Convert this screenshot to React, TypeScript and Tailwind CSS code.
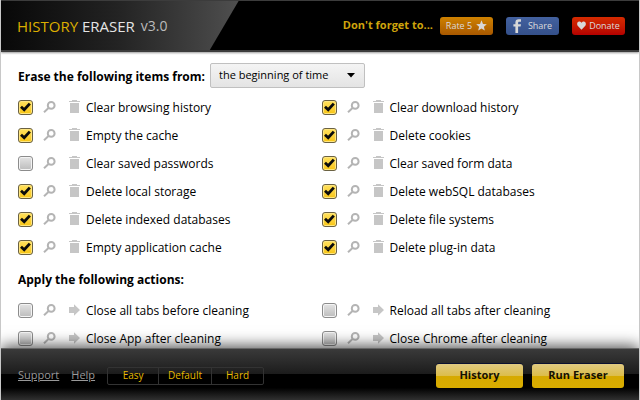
import React, { useState } from "react";

type Item = { label: string; checked: boolean };

const eraseItems: Item[] = [
  { label: "Clear browsing history", checked: true },
  { label: "Clear download history", checked: true },
  { label: "Empty the cache", checked: true },
  { label: "Delete cookies", checked: true },
  { label: "Clear saved passwords", checked: false },
  { label: "Clear saved form data", checked: true },
  { label: "Delete local storage", checked: true },
  { label: "Delete webSQL databases", checked: true },
  { label: "Delete indexed databases", checked: true },
  { label: "Delete file systems", checked: true },
  { label: "Empty application cache", checked: true },
  { label: "Delete plug-in data", checked: true },
];

const actionItems: Item[] = [
  { label: "Close all tabs before cleaning", checked: false },
  { label: "Reload all tabs after cleaning", checked: false },
  { label: "Close App after cleaning", checked: false },
  { label: "Close Chrome after cleaning", checked: false },
];

function Magnifier() {
  return (
    <svg width="13" height="12" viewBox="0 0 13 12" fill="none" stroke="#b4b4b4" strokeWidth="2">
      <circle cx="8.2" cy="4.4" r="3.4" />
      <path d="M5.8 6.8 L1 11.2" />
    </svg>
  );
}

function Trash() {
  return (
    <svg width="11" height="14" viewBox="0 0 11 14" fill="#c6c6c6">
      <path d="M0 1h3V0h5v1h3v1H0zM1 3h9v10H1z" />
    </svg>
  );
}

function Arrow() {
  return (
    <svg width="11" height="12" viewBox="0 0 11 12" fill="#c6c6c6">
      <path d="M0 3h5V0.2L11 6L5 11.8V9H0z" />
    </svg>
  );
}

function Row({ item, kind }: { item: Item; kind: "erase" | "action" }) {
  const [on, setOn] = useState(item.checked);
  const id = item.label.toLowerCase().replace(/ /g, "-");
  return (
    <li className="flex h-7 items-center">
      <span className="relative flex">
        <input
          id={id}
          type="checkbox"
          checked={on}
          onChange={() => setOn(!on)}
          className="size-[15px] appearance-none rounded-[3px] border border-[#8c8c8c] bg-linear-to-b from-[#e4e4e4] to-[#bcbcbc] shadow-[inset_0_0_0_1px_#f4f4f4] checked:border-[#6b6242] checked:from-[#ffe25c] checked:to-[#f8c400] checked:shadow-[inset_0_0_0_1px_#ffe680]"
        />
        {on && (
          <svg className="pointer-events-none absolute inset-0" width="15" height="15" viewBox="0 0 15 15" fill="none" stroke="#0b0b0b" strokeWidth="2.8">
            <path d="M3 6.8 L6.2 9.8 L11.8 3.6" />
          </svg>
        )}
      </span>
      <button type="button" aria-label={`Preview: ${item.label}`} className="ml-2.5 w-[13px]">
        <Magnifier />
      </button>
      <span className="ml-[13px] w-[17px]">{kind === "erase" ? <Trash /> : <Arrow />}</span>
      <label htmlFor={id} className="pt-0.5 whitespace-nowrap">
        {item.label}
      </label>
    </li>
  );
}

function Header() {
  const badge = "flex h-[18px] w-[53px] items-center justify-center rounded-[3px] text-[9px] leading-none font-medium text-[#dcdcdc]";
  return (
    <header className="flex h-[52px] shrink-0 items-center justify-between border-t border-b-2 border-[#3c3c3c] bg-black shadow-[0_1px_2px_rgba(0,0,0,0.4)]">
      <div className="flex h-full w-60 items-center bg-linear-to-r from-[#080808] via-[#242424] to-[#505050] pl-4 [clip-path:polygon(0_0,99%_0,87%_100%,0_100%)]">
        <h1 className="text-[15px] font-medium text-[#e4e4e4]">
          <span className="text-[#dcae00]">HISTORY</span> ERASER
        </h1>
        <span className="ml-1.5 text-sm text-[#bbb]">v3.0</span>
      </div>
      <nav className="flex items-center gap-[13px] pr-3.5">
        <div className="flex items-center gap-[7px]">
          <span className="text-[11px] font-bold text-[#cfa40c]">Don't forget to...</span>
          <button type="button" className={`${badge} gap-1 bg-linear-to-b from-[#cf8200] to-[#a85800]`}>
            Rate 5
            <svg width="11" height="11" viewBox="0 0 11 11" fill="#d8d8d8">
              <path d="M5.5 0.3L7 3.9L10.8 4.2L7.9 6.7L8.8 10.5L5.5 8.5L2.2 10.5L3.1 6.7L0.2 4.2L4 3.9z" />
            </svg>
          </button>
        </div>
        <button type="button" className={`${badge} gap-1.5 bg-linear-to-b from-[#43619f] to-[#34508a]`}>
          <svg width="9" height="14" viewBox="0 0 9 14" fill="#d8d8d8">
            <path d="M2.4 14V7.6H0.4V5.2H2.4V3.6C2.4 1.4 3.6 0.3 5.6 0.3H8V2.7H6.4C5.4 2.7 5.1 3.1 5.1 3.9V5.2H8L7.6 7.6H5.1V14z" />
          </svg>
          Share
        </button>
        <button type="button" className={`${badge} gap-[3px] bg-linear-to-b from-[#d52a00] to-[#b50000]`}>
          <svg width="9" height="9" viewBox="0 0 9 9" fill="#d8d8d8">
            <path d="M4.5 8.7L0.7 4.8C-0.3 3.5 0 0.8 2.3 0.6C3.4 0.6 4.1 1.2 4.5 2C4.9 1.2 5.6 0.6 6.7 0.6C9 0.8 9.3 3.5 8.3 4.8z" />
          </svg>
          Donate
        </button>
      </nav>
    </header>
  );
}

function Footer() {
  const gold = "h-6 rounded-[3px] bg-[linear-gradient(to_bottom,#dfc981_0%,#dcbd4a_49%,#d6a900_50%,#d9ad00_100%)] text-[11px] font-bold text-[#151000] shadow-[0_-1px_0_#0a1030]";
  return (
    <footer className="relative flex h-[52px] shrink-0 items-center justify-between border-t border-[#666] bg-[linear-gradient(to_bottom,#3a3a3a_0%,#1c1c1c_49%,#000_50%,#000_76%,#303030_100%)] pt-0.5 pr-[15px] pl-[17px] shadow-[0_-2px_14px_rgba(0,0,0,0.7)]">
      <div className="flex items-center gap-3 text-[11px]">
        <a href="#support" className="text-[#999] underline">Support</a>
        <a href="#help" className="text-[#999] underline">Help</a>
        <div className="flex h-[18px] divide-x divide-[#333] rounded-[2px] border border-[#333] text-[10px] font-medium text-[#e6ba00]">
          <button type="button" className="w-[51px]">Easy</button>
          <button type="button" className="w-[53px]">Default</button>
          <button type="button" className="w-[51px]">Hard</button>
        </div>
      </div>
      <div className="flex gap-[9px]">
        <button type="button" className={`${gold} w-[87px]`}>History</button>
        <button type="button" className={`${gold} w-[92px]`}>Run Eraser</button>
      </div>
    </footer>
  );
}

export default function App() {
  return (
    <div className="flex h-screen flex-col overflow-hidden border-x border-[#c8c8c8] bg-white font-['Open_Sans','Noto_Sans',sans-serif] text-xs text-black">
      <Header />
      <main className="min-h-0 flex-1 overflow-hidden pt-[11px] pr-3.5 pl-[17px]">
        <div className="mb-[5px] flex items-center">
          <label htmlFor="range" className="mr-[5px] pt-0.5 font-bold">Erase the following items from:</label>
          <div className="relative">
            <select id="range" className="h-[25px] w-[155px] appearance-none rounded-[2px] border border-[#c0c0c0] bg-linear-to-b from-[#f4f4f4] to-[#e4e4e4] pl-2 text-[11px]">
              <option>the beginning of time</option>
              <option>the past week</option>
              <option>the past day</option>
            </select>
            <svg className="pointer-events-none absolute top-[10px] right-[10px]" width="8" height="5" viewBox="0 0 8 5">
              <path d="M0 0h8L4 4.6z" />
            </svg>
          </div>
        </div>
        <ul className="grid grid-cols-2">
          {eraseItems.map((item) => <Row key={item.label} item={item} kind="erase" />)}
        </ul>
        <h2 className="flex h-[35px] items-center pt-0.5 font-bold">Apply the following actions:</h2>
        <ul className="grid grid-cols-2">
          {actionItems.map((item) => <Row key={item.label} item={item} kind="action" />)}
        </ul>
      </main>
      <Footer />
    </div>
  );
}
